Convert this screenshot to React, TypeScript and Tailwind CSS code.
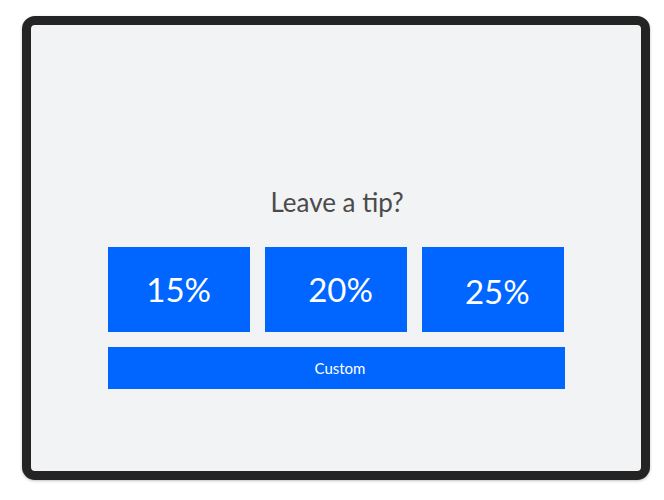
import React from 'react';

const tips = [
  { label: '15%', offset: '' },
  { label: '20%', offset: 'pl-[9px]' },
  { label: '25%', offset: 'pl-[8px] pt-[4px]' },
];

export default function App() {
  return (
    <div className="w-[664px] h-[500px] bg-white pl-[22px] pt-[16px]" style={{ fontFamily: 'Lato, "Open Sans", sans-serif' }}>
      {/* Tablet frame */}
      <div className="w-[628px] h-[464px] rounded-[13px] border-[9px] border-[#242424] bg-[#f2f3f5] shadow-[0_1px_3px_rgba(0,0,0,0.25)] overflow-hidden">
        <div className="flex flex-col items-center pt-[161px]">
          <h1 className="text-[26px] leading-[32px] text-[#4a4a4a] font-normal pl-[2px]">Leave a tip?</h1>
          <div className="mt-[29px] w-[457px] grid grid-cols-3 gap-[15px]">
            {tips.map((t) => (
              <button
                key={t.label}
                className={`h-[85px] bg-[#0066ff] text-white text-[33px] font-normal flex items-center justify-center ${t.offset}`}
              >
                {t.label}
              </button>
            ))}
          </div>
          <button className="mt-[15px] w-[457px] h-[42px] bg-[#0066ff] text-white text-[15px] pl-[8px] flex items-center justify-center">
            Custom
          </button>
        </div>
      </div>
    </div>
  );
}
